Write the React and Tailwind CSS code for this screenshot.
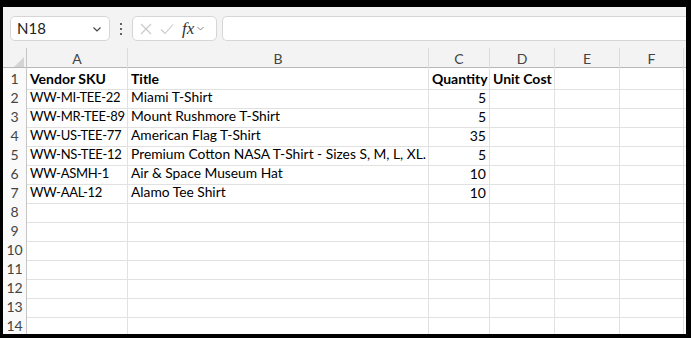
import React from 'react';

const cols = ['A', 'B', 'C', 'D', 'E', 'F'];

const rows = [
  ['Vendor SKU', 'Title', 'Quantity', 'Unit Cost'],
  ['WW-MI-TEE-22', 'Miami T-Shirt', '5'],
  ['WW-MR-TEE-89', 'Mount Rushmore T-Shirt', '5'],
  ['WW-US-TEE-77', 'American Flag T-Shirt', '35'],
  ['WW-NS-TEE-12', 'Premium Cotton NASA T-Shirt - Sizes S, M, L, XL.', '5'],
  ['WW-ASMH-1', 'Air & Space Museum Hat', '10'],
  ['WW-AAL-12', 'Alamo Tee Shirt', '10'],
];

const grid = 'grid grid-cols-[24px_101px_301px_61px_65px_65px_64px_1fr]';

function Toolbar() {
  return (
    <div className="h-[41px] bg-[#f3f3f3] flex items-center pl-[7px] pt-[2px]">
      <div className="w-[100px] h-[25px] bg-white border border-[#d6d6d6] rounded-[5px] flex items-center justify-between pl-[6px] pr-[6px]">
        <span className="text-[15px] text-[#222]">N18</span>
        <svg width="12" height="12" viewBox="0 0 12 12" fill="none" stroke="#444" strokeWidth="1.2">
          <path d="M2.5 4.5 L6 8 L9.5 4.5" />
        </svg>
      </div>
      <div className="w-[22px] flex flex-col items-center gap-[3px]">
        <span className="w-[2px] h-[2px] bg-[#333] rounded-full" />
        <span className="w-[2px] h-[2px] bg-[#333] rounded-full" />
        <span className="w-[2px] h-[2px] bg-[#333] rounded-full" />
      </div>
      <div className="w-[85px] h-[25px] bg-white border border-[#d6d6d6] rounded-[5px] flex items-center pl-[7px] gap-[8px]">
        <svg width="12" height="12" viewBox="0 0 12 12" fill="none" stroke="#c8c8c8" strokeWidth="1.1">
          <path d="M1 1 L11 11 M11 1 L1 11" />
        </svg>
        <svg width="14" height="12" viewBox="0 0 14 12" fill="none" stroke="#c8c8c8" strokeWidth="1.1">
          <path d="M1 6.5 L5 10.5 L13 1.5" />
        </svg>
        <div className="flex items-center gap-[2px]">
          <span className="text-[17px] italic text-[#333] font-['Liberation_Serif',serif] leading-none">fx</span>
          <svg width="9" height="9" viewBox="0 0 9 9" fill="none" stroke="#888" strokeWidth="1">
            <path d="M1.5 3 L4.5 6 L7.5 3" />
          </svg>
        </div>
      </div>
      <div className="flex-1 h-[25px] ml-[5px] bg-white border border-[#d6d6d6] border-r-0 rounded-l-[5px]" />
    </div>
  );
}

export default function App() {
  return (
    <div className="w-[691px] h-[338px] bg-black pt-[7px] pl-[3px] pr-[5px] pb-[4px] font-['Lato',sans-serif] overflow-hidden">
      <div className="h-full bg-white flex flex-col overflow-hidden">
        <Toolbar />
        <div className={`${grid} h-[20px] bg-[#f3f3f3] border-b border-[#b8b8b8] text-[14px] text-[#444]`}>
          <div className="border-r border-[#c6c6c6] relative">
            <svg className="absolute right-[2px] bottom-[2px]" width="10" height="10" viewBox="0 0 10 10">
              <path d="M10 0 L10 10 L0 10 Z" fill="#d4d4d4" />
            </svg>
          </div>
          {cols.map((c) => (
            <div key={c} className="border-r border-[#dcdcdc] flex items-center justify-center">{c}</div>
          ))}
          <div />
        </div>
        {Array.from({ length: 14 }).map((_, i) => {
          const r = rows[i] || [];
          const bold = i === 0;
          return (
            <div key={i} className={`${grid} h-[19px] text-[14px] text-black shrink-0`}>
              <div className="bg-[#fafafa] border-r border-b border-[#c6c6c6] text-[#444] flex items-center justify-center">{i + 1}</div>
              <div className={`border-r border-b border-[#e1e1e1] pl-[3px] flex items-center whitespace-nowrap overflow-hidden ${bold ? 'font-bold' : 'text-[13px] tracking-[-0.3px]'}`}>{r[0]}</div>
              <div className={`border-r border-b border-[#e1e1e1] pl-[3px] flex items-center whitespace-nowrap ${bold ? 'font-bold' : 'text-[13.8px]'}`}>{r[1]}</div>
              <div className={`border-r border-b border-[#e1e1e1] px-[3px] flex items-center whitespace-nowrap ${bold ? 'font-bold justify-start' : 'justify-end'}`}>{r[2]}</div>
              <div className={`border-r border-b border-[#e1e1e1] pl-[3px] flex items-center whitespace-nowrap ${bold ? 'font-bold' : ''}`}>{r[3]}</div>
              <div className="border-r border-b border-[#e1e1e1]" />
              <div className="border-r border-b border-[#e1e1e1]" />
              <div className="border-b border-[#e1e1e1]" />
            </div>
          );
        })}
      </div>
    </div>
  );
}
